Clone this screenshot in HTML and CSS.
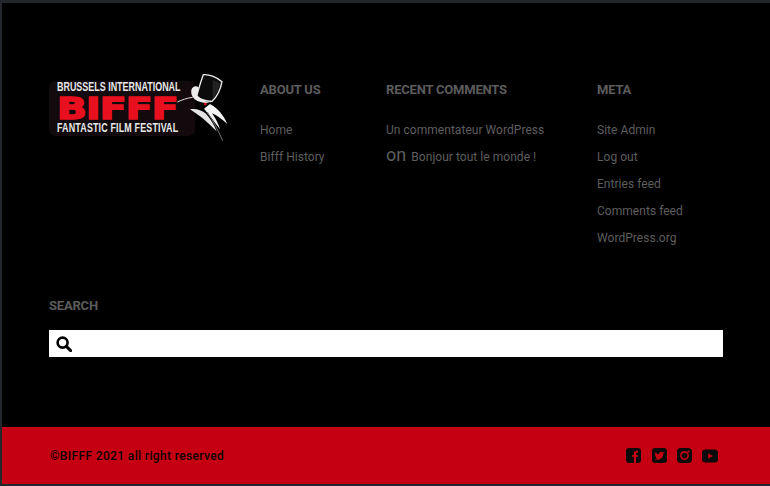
FILE: index.html
```html
<!DOCTYPE html>
<html lang="en">
<head>
    <meta charset="UTF-8">
    <title>BIFFF</title>
    <link rel="stylesheet" href="styles.css">
</head>
<body>
    <div class="frame">
        <div class="main">
            <div class="columns">
                <a class="logo" href="#">
                    <div class="plate">
                        <div class="logo-line">BRUSSELS INTERNATIONAL</div>
                        <div class="logo-name">BIFFF</div>
                        <div class="logo-line logo-line-wide">FANTASTIC FILM FESTIVAL</div>
                    </div>
                    <svg class="figure" viewBox="0 0 192 228" width="64" height="76">
                        <path d="M22 102 C36 96 50 90 68 88" fill="none" stroke="#ddd" stroke-width="3"/>
                        <path d="M100 20 C118 18 142 28 156 41 C152 62 142 86 126 100 C110 100 92 96 80 84 C86 64 92 40 100 20 Z" fill="#0b0b0b" stroke="#f0f0f0" stroke-width="4"/>
                        <path d="M128 36 C138 40 146 44 150 48 C146 66 138 82 128 92 Z" fill="#222"/>
                        <path d="M64 66 C68 54 78 52 86 58 L82 84 C92 96 106 102 124 104 C108 108 88 104 74 94 C66 86 62 76 64 66 Z" fill="#eee"/>
                        <path d="M96 108 L122 102 L118 114 L104 116 Z" fill="#0b0b0b"/>
                        <circle cx="106" cy="108" r="4" fill="#e4101c"/>
                        <path d="M120 108 C144 120 162 144 172 168 C156 154 140 142 126 136 C136 150 146 168 150 184 C136 164 120 144 102 122 Z" fill="#f4f4f4"/>
                        <path d="M60 124 C76 120 94 126 106 136 C120 150 132 170 140 190 C124 174 104 154 88 143 C78 136 68 130 60 124 Z" fill="#e4e4e4"/>
                        <path d="M112 132 C128 156 146 190 158 218" fill="none" stroke="#777" stroke-width="3"/>
                    </svg>
                </a>
                <div class="col col-about">
                    <h4>ABOUT US</h4>
                    <ul>
                        <li><a href="#">Home</a></li>
                        <li><a href="#">Bifff History</a></li>
                    </ul>
                </div>
                <div class="col col-recent">
                    <h4>RECENT COMMENTS</h4>
                    <ul>
                        <li><a href="#">Un commentateur WordPress</a></li>
                        <li class="comment"><span class="on">on</span> <a href="#">Bonjour tout le monde !</a></li>
                    </ul>
                </div>
                <div class="col col-meta">
                    <h4>META</h4>
                    <ul>
                        <li><a href="#">Site Admin</a></li>
                        <li><a href="#">Log out</a></li>
                        <li><a href="#">Entries feed</a></li>
                        <li><a href="#">Comments feed</a></li>
                        <li><a href="#">WordPress.org</a></li>
                    </ul>
                </div>
            </div>
            <div class="search">
                <h4>SEARCH</h4>
                <div class="search-box">
                    <svg viewBox="0 0 16 16" width="16" height="16">
                        <circle cx="6.6" cy="6.6" r="5" fill="none" stroke="#000" stroke-width="2.6"/>
                        <path d="M10.4 10.4 L14.6 14.6" stroke="#000" stroke-width="3" stroke-linecap="round"/>
                    </svg>
                </div>
            </div>
        </div>
        <div class="bottom">
            <span class="copy">©BIFFF 2021 all right reserved</span>
            <div class="social">
                <svg class="fb" viewBox="0 0 16 16" width="15" height="15">
                    <rect x="0" y="0" width="16" height="16" rx="3.5"/>
                    <path class="cut" d="M8.4 16 V9.6 H6.6 V7.4 H8.4 V5.8 C8.4 4 9.5 3 11.1 3 H12.8 V5.2 H11.6 C10.9 5.2 10.7 5.6 10.7 6.1 V7.4 H12.7 L12.4 9.6 H10.7 V16 Z"/>
                </svg>
                <svg viewBox="0 0 16 16" width="15" height="15">
                    <rect x="0" y="0" width="16" height="16" rx="3.5"/>
                    <path class="cut" d="M13.2 4.9 C12.8 5.1 12.4 5.2 11.9 5.3 C12.4 5 12.7 4.6 12.9 4 C12.4 4.3 12 4.5 11.4 4.6 C10.5 3.7 9.1 3.7 8.3 4.6 C7.8 5.1 7.6 5.8 7.8 6.5 C6 6.4 4.4 5.6 3.3 4.2 C2.7 5.2 3 6.6 4 7.2 C3.6 7.2 3.3 7.1 3 6.9 C3 8 3.7 8.9 4.7 9.1 C4.4 9.2 4 9.2 3.7 9.2 C4 10.1 4.8 10.7 5.7 10.7 C4.8 11.4 3.7 11.7 2.6 11.6 C3.6 12.2 4.7 12.6 5.9 12.6 C9.9 12.6 12.2 9.3 12 6.2 C12.5 5.9 12.9 5.4 13.2 4.9 Z"/>
                </svg>
                <svg viewBox="0 0 16 16" width="15" height="15">
                    <rect x="0" y="0" width="16" height="16" rx="4"/>
                    <circle class="ring" cx="8" cy="8" r="3.9"/>
                    <circle class="cut" cx="12.3" cy="3.7" r="1"/>
                </svg>
                <svg viewBox="0 0 16 16" width="16" height="16">
                    <rect x="0" y="1.5" width="16" height="13" rx="3.5"/>
                    <path class="cut" d="M6.2 5.2 L11 8 L6.2 10.8 Z"/>
                </svg>
            </div>
        </div>
    </div>
</body>
</html>
```
FILE: styles.css
```css
html, body {
    margin: 0;
    padding: 0;
    height: 100%;
}

body {
    background-color: #23272b;
    font-family: Roboto, sans-serif;
    overflow: hidden;
}

.frame {
    display: flex;
    flex-direction: column;
    height: 481px;
    margin-top: 3px;
    margin-left: 2px;
}

.main {
    flex: 1;
    background-color: #000;
    padding: 79px 47px 0 47px;
    box-sizing: border-box;
}

.columns {
    display: flex;
    height: 216px;
}

a {
    color: inherit;
    text-decoration: none;
}

h4 {
    margin: 0;
    font-size: 13px;
    font-weight: 700;
    line-height: 16px;
    letter-spacing: -0.2px;
    color: #5c5c5c;
}

ul {
    list-style: none;
    margin: 19px 0 0 0;
    padding: 0;
}

li {
    font-size: 12px;
    line-height: 27px;
    letter-spacing: 0.04px;
    color: #5e5e5e;
}

.logo {
    display: block;
    position: relative;
    width: 211px;
    height: 56px;
    margin-top: -1px;
    flex: none;
}

.plate {
    width: 146px;
    height: 55px;
    background-color: #120a0c;
    border-radius: 7px;
    padding: 1px 0 0 8px;
    box-sizing: border-box;
}

.logo-line {
    font-family: "Liberation Sans", sans-serif;
    font-size: 12px;
    line-height: 11px;
    font-weight: 700;
    color: #e8e8e8;
    white-space: nowrap;
    transform: scaleX(0.745);
    transform-origin: left;
}

.logo-line-wide {
    letter-spacing: 0.2px;
}

.logo-name {
    font-family: "DejaVu Sans", sans-serif;
    font-size: 31px;
    line-height: 30px;
    height: 30px;
    font-weight: 700;
    letter-spacing: -0.6px;
    color: #e8101e;
    -webkit-text-stroke: 1.6px #e8101e;
    transform: scaleX(1.26);
    transform-origin: left;
}

.figure {
    position: absolute;
    left: 121px;
    top: -13px;
}

.col-about {
    width: 126px;
}

.col-recent {
    width: 211px;
}

.on {
    font-size: 18px;
    line-height: 1;
    margin-right: 2px;
}

.search h4 {
    margin-bottom: 16px;
}

.search-box {
    display: flex;
    align-items: center;
    height: 27px;
    width: 674px;
    padding-left: 7px;
    box-sizing: border-box;
    background-color: #fff;
}

.bottom {
    display: flex;
    justify-content: space-between;
    align-items: center;
    height: 57px;
    flex: none;
    background-color: #c40012;
    padding: 0 52px 0 48px;
}

.copy {
    font-size: 12px;
    font-weight: 500;
    letter-spacing: 0.36px;
    color: #0d0000;
}

.social {
    display: flex;
    align-items: center;
    gap: 10px;
}

.social svg {
    fill: #0a0a0a;
}

.social .fb {
    margin-right: 1px;
}

.social .cut {
    fill: #c40012;
}

.social .ring {
    fill: none;
    stroke: #c40012;
    stroke-width: 1.8;
}
```
